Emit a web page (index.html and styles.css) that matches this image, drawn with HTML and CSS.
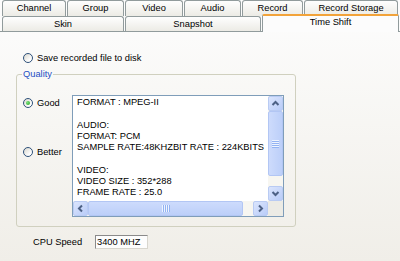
FILE: index.html
```html
<!DOCTYPE html>
<html>
<head>
<meta charset="utf-8">
<link rel="stylesheet" href="styles.css">
</head>
<body>
<div class="tabrow row1">
  <div class="tab t-channel">Channel</div>
  <div class="tab t-group">Group</div>
  <div class="tab t-video">Video</div>
  <div class="tab t-audio">Audio</div>
  <div class="tab t-record">Record</div>
  <div class="tab t-storage">Record Storage</div>
</div>
<div class="tabrow row2">
  <div class="tab t-skin">Skin</div>
  <div class="tab t-snap">Snapshot</div>
  <div class="tab sel t-ts">Time Shift</div>
</div>
<div class="panel">
  <div class="radio-row save"><span class="radio"></span><span>Save recorded file to disk</span></div>
  <fieldset class="quality">
    <legend>Quality</legend>
    <div class="qbody">
      <div class="qopts">
        <div class="radio-row good"><span class="radio on"></span><span>Good</span></div>
        <div class="radio-row better"><span class="radio"></span><span>Better</span></div>
      </div>
      <div class="memo">
        <div class="memo-text">FORMAT : MPEG-II

AUDIO:
FORMAT: PCM
SAMPLE RATE:48KHZBIT RATE : 224KBITS

VIDEO:
VIDEO SIZE : 352*288
FRAME RATE : 25.0</div>
        <div class="vscroll">
          <div class="sbtn"><svg width="13" height="13" viewBox="0 0 13 13"><polyline points="3.5,8 6.5,5 9.5,8" fill="none" stroke="#4d6185" stroke-width="2"/></svg></div>
          <div class="vthumb"><span class="vgrip"></span></div>
          <div class="vtrack"></div>
          <div class="sbtn"><svg width="13" height="13" viewBox="0 0 13 13"><polyline points="3.5,5 6.5,8 9.5,5" fill="none" stroke="#4d6185" stroke-width="2"/></svg></div>
        </div>
        <div class="hscroll">
          <div class="sbtn"><svg width="13" height="13" viewBox="0 0 13 13"><polyline points="8,3.5 5,6.5 8,9.5" fill="none" stroke="#4d6185" stroke-width="2"/></svg></div>
          <div class="hthumb"><span class="hgrip"></span></div>
          <div class="htrack"></div>
          <div class="sbtn"><svg width="13" height="13" viewBox="0 0 13 13"><polyline points="5,3.5 8,6.5 5,9.5" fill="none" stroke="#4d6185" stroke-width="2"/></svg></div>
        </div>
        <div class="corner"></div>
      </div>
    </div>
  </fieldset>
  <div class="cpu"><span class="cpu-label">CPU Speed</span><span class="cpu-box">3400 MHZ</span></div>
</div>
</body>
</html>
```

FILE: styles.css
```css
* { box-sizing: border-box; }
html, body { margin: 0; padding: 0; }
body {
  width: 400px;
  height: 261px;
  overflow: hidden;
  font-family: "Liberation Sans", Arial, sans-serif;
  font-size: 9.3px;
  color: #000;
  background: linear-gradient(#fdfdfd, #f0eee8);
}
.tabrow { display: flex; gap: 1px; padding-left: 2px; }
.row1 { height: 16px; }
.row2 { height: 16px; border-bottom: 1px solid #919b9c; align-items: flex-end; }
.tab {
  flex-shrink: 0;
  height: 16px;
  border: 1px solid #919b9c;
  border-bottom: none;
  border-radius: 3px 3px 0 0;
  background: linear-gradient(#fefefe, #ecebe5);
  text-align: center;
  line-height: 14px;
  white-space: nowrap;
}
.row2 .tab { height: 15px; }
.row2 .tab.sel {
  height: 18px;
  margin-bottom: -1px;
  border-top: 2px solid #f2a33a;
  border-radius: 2px 2px 0 0;
  background: #fcfcfc;
  line-height: 12px;
}
.t-channel { width: 64px; }
.t-group { width: 57px; }
.t-video { width: 58px; }
.t-audio { width: 57px; }
.t-record { width: 61px; }
.t-storage { width: 94px; }
.t-skin { width: 122px; }
.t-snap { width: 136px; }
.t-ts { width: 137px; }

.panel { padding-top: 21px; }
.radio-row { display: flex; align-items: center; gap: 4px; height: 10px; line-height: 10px; }
.save { margin-left: 23px; }
.radio {
  width: 10px; height: 10px;
  border: 1px solid #2d5079;
  border-radius: 50%;
  background: linear-gradient(135deg, #d8d6cd, #ffffff 75%);
  display: flex; align-items: center; justify-content: center;
  flex-shrink: 0;
}
.radio.on::after {
  content: "";
  width: 4px; height: 4px;
  border-radius: 50%;
  background: radial-gradient(circle at 35% 35%, #7be37b, #21a121);
}
.quality {
  margin: 6px 0 0 16px;
  width: 280px;
  border: 1px solid #d0d0bf;
  border-radius: 3px;
  padding: 16px 11px 9px 0;
}
.quality legend {
  margin-left: 5px;
  padding: 0 1px;
  color: #1f4fc4;
  line-height: 10px;
}
.qbody { display: flex; }
.qopts { width: 55px; padding: 3px 0 0 6px; }
.better { margin-top: 39px; }
.memo {
  width: 212px;
  height: 122px;
  border: 1px solid #7f9db9;
  background: #fff;
  display: grid;
  grid-template-columns: 195px 15px;
  grid-template-rows: 105px 15px;
}
.memo-text {
  padding: 1px 0 0 4px;
  white-space: pre;
  overflow: hidden;
  line-height: 11.3px;
}
.vscroll { display: flex; flex-direction: column; background: #f7f6f1; }
.hscroll { display: flex; background: #f7f6f1; }
.sbtn {
  width: 15px; height: 15px;
  flex-shrink: 0;
  border: 1px solid #b9cbf3;
  border-radius: 2px;
  background: linear-gradient(135deg, #dbe5fd, #b9ccf8);
  display: flex; align-items: center; justify-content: center;
}
.vthumb, .hthumb {
  border: 1px solid #b2c6f4;
  border-radius: 2px;
  background: linear-gradient(90deg, #cddbfc, #bccff9);
  display: flex; align-items: center; justify-content: center;
}
.vthumb { height: 65px; }
.vtrack { height: 10px; }
.hthumb { width: 155px; background: linear-gradient(#cddbfc, #bccff9); }
.htrack { width: 10px; }
.vgrip {
  width: 7px; height: 8px;
  background: repeating-linear-gradient(to bottom, #eef4fe 0 1px, #93b3f3 1px 2px);
}
.hgrip {
  width: 8px; height: 7px;
  background: repeating-linear-gradient(to right, #eef4fe 0 1px, #93b3f3 1px 2px);
}
.corner { background: #ecebe5; }
.cpu { display: flex; align-items: center; margin: 8px 0 0 33px; height: 14px; }
.cpu-label { width: 62px; }
.cpu-box {
  width: 53px; height: 14px;
  border-top: 1px solid #8a8a8a;
  border-left: 1px solid #8a8a8a;
  border-right: 1px solid #d8d6ce;
  border-bottom: 1px solid #d8d6ce;
  background: #fdfdfd;
  padding-left: 1px;
  line-height: 12px;
}
```
